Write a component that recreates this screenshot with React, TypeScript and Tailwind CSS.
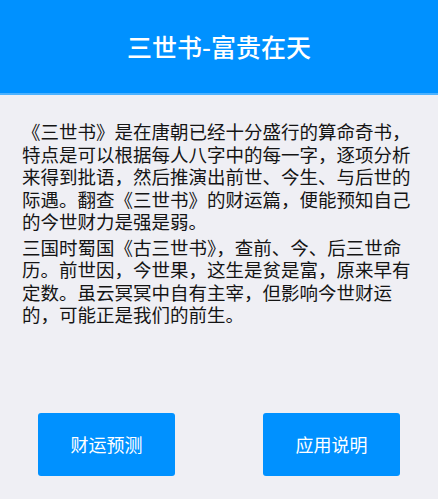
const intro = [
  "《三世书》是在唐朝已经十分盛行的算命奇书，特点是可以根据每人八字中的每一字，逐项分析来得到批语，然后推演出前世、今生、与后世的际遇。翻查《三世书》的财运篇，便能预知自己的今世财力是强是弱。",
  "三国时蜀国《古三世书》，查前、今、后三世命历。前世因，今世果，这生是贫是富，原来早有定数。虽云冥冥中自有主宰，但影响今世财运的，可能正是我们的前生。",
];

function ActionButton({ label }: { label: string }) {
  return (
    <button className="w-[137px] h-[63px] rounded-[3px] bg-[#0091ff] text-white text-[18px] flex items-center justify-center">
      {label}
    </button>
  );
}

export default function App() {
  return (
    <div
      className="h-screen flex flex-col bg-[#efeff4]"
      style={{ fontFamily: '"Noto Sans CJK SC", "Noto Sans", sans-serif' }}
    >
      <header className="h-[95px] shrink-0 bg-[#0091ff] border-b-2 border-[#4db2ff] flex items-center justify-center">
        <h1 className="text-white text-[25px] font-medium">三世书-富贵在天</h1>
      </header>

      <main className="flex-1 pl-[22px] pr-[20px] pt-[25px] text-[#141414] text-[18.5px] leading-[22.5px]">
        {intro.map((p, i) => (
          <p key={i} className={i > 0 ? "mt-[3px]" : ""}>
            {p}
          </p>
        ))}
      </main>

      <div className="flex justify-between px-[38px] pb-[23px]">
        <ActionButton label="财运预测" />
        <ActionButton label="应用说明" />
      </div>
    </div>
  );
}
